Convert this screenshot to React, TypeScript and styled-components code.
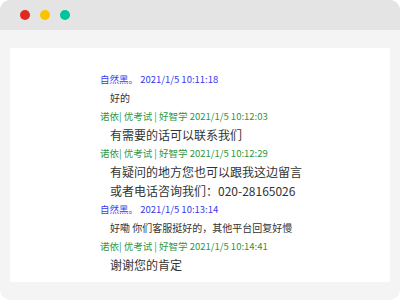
import styled, { createGlobalStyle } from 'styled-components'

const GlobalStyle = createGlobalStyle`
  html, body {
    margin: 0;
    padding: 0;
    background: #ffffff;
  }
  body {
    font-family: "Noto Sans CJK SC", sans-serif;
  }
`

type Entry = {
  from: 'customer' | 'agent'
  name: string
  time: string
  lines: string[]
}

const ENTRIES: Entry[] = [
  { from: 'customer', name: '自然黑。', time: '2021/1/5 10:11:18', lines: ['好的'] },
  {
    from: 'agent',
    name: '诺依| 优考试 | 好智学',
    time: '2021/1/5 10:12:03',
    lines: ['有需要的话可以联系我们'],
  },
  {
    from: 'agent',
    name: '诺依| 优考试 | 好智学',
    time: '2021/1/5 10:12:29',
    lines: ['有疑问的地方您也可以跟我这边留言', '或者电话咨询我们：020-28165026'],
  },
  {
    from: 'customer',
    name: '自然黑。',
    time: '2021/1/5 10:13:14',
    lines: ['好嘞 你们客服挺好的，其他平台回复好慢'],
  },
  {
    from: 'agent',
    name: '诺依| 优考试 | 好智学',
    time: '2021/1/5 10:14:41',
    lines: ['谢谢您的肯定'],
  },
]

const DOTS = ['#e12a1e', '#fcc400', '#00c49a']

const App = () => {
  return (
    <>
      <GlobalStyle />
      <WINDOW>
        <TITLE_BAR>
          {DOTS.map((color) => (
            <DOT key={color} $color={color} />
          ))}
        </TITLE_BAR>
        <BODY>
          <PANEL>
            {ENTRIES.map((entry) => (
              <MESSAGE key={entry.time}>
                <META $from={entry.from}>
                  {entry.name} {entry.time}
                </META>
                {entry.lines.map((line) => (
                  <LINE key={line} $from={entry.from}>
                    {line}
                  </LINE>
                ))}
              </MESSAGE>
            ))}
          </PANEL>
        </BODY>
      </WINDOW>
    </>
  )
}

export default App

const WINDOW = styled.div`
  width: 400px;
  height: 300px;
  border-radius: 10px;
  background: #f4f4f4;
  overflow: hidden;
  display: flex;
  flex-direction: column;
`

const TITLE_BAR = styled.header`
  height: 30px;
  flex: none;
  background: #e4e4e4;
  display: flex;
  align-items: center;
  gap: 10px;
  padding-left: 20px;
`

const DOT = styled.span<{ $color: string }>`
  width: 10px;
  height: 10px;
  border-radius: 50%;
  background: ${({ $color }) => $color};
`

const BODY = styled.main`
  flex: 1;
  padding: 18px 10px;
  display: flex;
`

const PANEL = styled.section`
  flex: 1;
  background: #ffffff;
  padding: 22px 0 0 90px;
  display: flex;
  flex-direction: column;
`

const MESSAGE = styled.article`
  display: flex;
  flex-direction: column;
`

const META = styled.div<{ $from: 'customer' | 'agent' }>`
  font-size: 9.5px;
  line-height: 18px;
  white-space: nowrap;
  color: ${({ $from }) => ($from === 'customer' ? '#3838f0' : '#2e9640')};
`

const LINE = styled.div<{ $from: 'customer' | 'agent' }>`
  padding-left: 10px;
  line-height: 19px;
  white-space: nowrap;
  color: #333333;
  font-size: ${({ $from }) => ($from === 'customer' ? '10px' : '12px')};
`
